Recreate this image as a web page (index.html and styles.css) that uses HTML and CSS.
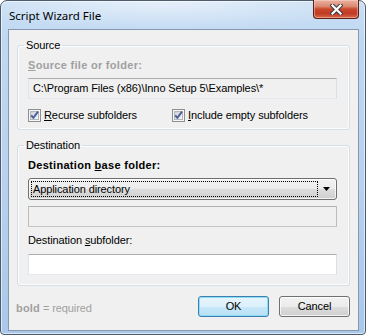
FILE: index.html
```html
<!DOCTYPE html>
<html>
<head>
<meta charset="utf-8">
<link rel="stylesheet" href="styles.css">
</head>
<body>
<div class="window">
  <div class="titlebar">
    <span class="title">Script Wizard File</span>
    <div class="close">
      <svg width="13" height="11" viewBox="0 0 13 11">
        <path d="M2.5 1.5 L10.5 9.5 M10.5 1.5 L2.5 9.5" stroke="#3b3b44" stroke-width="4.2" stroke-linecap="square" fill="none"/>
        <path d="M2.5 1.5 L10.5 9.5 M10.5 1.5 L2.5 9.5" stroke="#ffffff" stroke-width="2.2" stroke-linecap="square" fill="none"/>
      </svg>
    </div>
  </div>
  <div class="client">
    <fieldset class="group group-source">
      <legend>Source</legend>
      <div class="label bold disabled"><u>S</u>ource file or folder:</div>
      <div class="edit readonly">C:\Program Files (x86)\Inno Setup 5\Examples\*</div>
      <div class="checks">
        <div class="check">
          <span class="box">
            <svg width="13" height="13" viewBox="0 0 13 13">
              <defs><linearGradient id="cg1" x1="0" y1="0" x2="1" y2="1"><stop offset="0" stop-color="#cbcfd5"/><stop offset="1" stop-color="#f7f7f7"/></linearGradient></defs>
              <rect x="0.5" y="0.5" width="12" height="12" fill="#f6f6f6" stroke="#8e8f8f"/>
              <rect x="2.5" y="2.5" width="8" height="8" fill="url(#cg1)" stroke="#b1b6bc"/>
              <path d="M3.2 6.3 L5.4 8.8 L10 2.6" stroke="#4a5e98" stroke-width="1.9" fill="none"/>
            </svg>
          </span>
          <span><u>R</u>ecurse subfolders</span>
        </div>
        <div class="check">
          <span class="box">
            <svg width="13" height="13" viewBox="0 0 13 13">
              <defs><linearGradient id="cg2" x1="0" y1="0" x2="1" y2="1"><stop offset="0" stop-color="#cbcfd5"/><stop offset="1" stop-color="#f7f7f7"/></linearGradient></defs>
              <rect x="0.5" y="0.5" width="12" height="12" fill="#f6f6f6" stroke="#8e8f8f"/>
              <rect x="2.5" y="2.5" width="8" height="8" fill="url(#cg2)" stroke="#b1b6bc"/>
              <path d="M3.2 6.3 L5.4 8.8 L10 2.6" stroke="#4a5e98" stroke-width="1.9" fill="none"/>
            </svg>
          </span>
          <span><u>I</u>nclude empty subfolders</span>
        </div>
      </div>
    </fieldset>

    <fieldset class="group group-dest">
      <legend>Destination</legend>
      <div class="label bold">Destination <u>b</u>ase folder:</div>
      <div class="combo">
        <div class="combo-focus">Application directory</div>
        <div class="combo-arrow">
          <svg width="7" height="4" viewBox="0 0 7 4"><path d="M0 0 H7 L3.5 4 Z" fill="#000"/></svg>
        </div>
      </div>
      <div class="edit disabled-edit"></div>
      <div class="label label-sub">Destination <u>s</u>ubfolder:</div>
      <div class="edit normal"></div>
    </fieldset>

    <div class="footer">
      <div class="hint"><b>bold</b> = required</div>
      <div class="buttons">
        <div class="btn btn-default">OK</div>
        <div class="btn">Cancel</div>
      </div>
    </div>
  </div>
</div>
</body>
</html>
```
FILE: styles.css
```css
html, body {
  margin: 0;
  padding: 0;
  background: #ffffff;
}

.window {
  box-sizing: border-box;
  width: 366px;
  height: 335px;
  border: 1px solid #4e5d6d;
  border-radius: 7px 7px 4px 4px;
  padding: 0 6px 3px 7px;
  display: flex;
  flex-direction: column;
  background:
    radial-gradient(ellipse 60% 30px at 45% 0%, rgba(255,255,255,0.55), rgba(255,255,255,0)),
    linear-gradient(180deg, #c9def4 0%, #bfd8f2 12%, #b6d0ee 60%, #a9c8ea 100%);
  box-shadow: inset 0 0 0 1px rgba(255,255,255,0.55);
  font-family: "Liberation Sans", Arial, sans-serif;
  font-size: 11px;
  letter-spacing: -0.1px;
  color: #000;
}

.titlebar {
  height: 28px;
  display: flex;
  align-items: flex-start;
  justify-content: space-between;
}

.title {
  align-self: center;
  font-family: "Noto Sans", "Open Sans", sans-serif;
  font-size: 11.5px;
  letter-spacing: 0;
  line-height: 16px;
  padding-left: 1px;
  margin-top: 1px;
  color: #000;
}

.close {
  box-sizing: border-box;
  width: 46px;
  height: 19px;
  margin-top: -1px;
  border: 1px solid #5c1e12;
  border-top: none;
  border-radius: 0 0 4px 4px;
  background:
    linear-gradient(180deg, #eab3a3 0%, #dc8a72 35%, #c8492f 50%, #c13a22 75%, #d86a4c 100%);
  box-shadow: inset 0 0 0 1px rgba(255,220,210,0.45);
  display: flex;
  align-items: center;
  justify-content: center;
}

.close svg {
  display: block;
}

.client {
  flex: 1;
  border: 1px solid #8598ad;
  background: #f0f0f0;
  padding: 8px 8px 0 8px;
  display: flex;
  flex-direction: column;
}

.group {
  margin: 0;
  min-width: 0;
  border: 1px solid #d5dfe5;
  border-radius: 3px;
  box-shadow: inset 0 0 0 1px #fbfcfd;
  padding: 6px 12px 7px 10px;
}

.group legend {
  padding: 0 2px;
  margin-left: -4px;
  line-height: 14px;
  font-size: 11px;
}

.group-dest {
  margin-top: 8px;
  padding-bottom: 10px;
}

.label {
  line-height: 14px;
  white-space: nowrap;
}

.bold {
  font-weight: bold;
  letter-spacing: 0.3px;
}

.disabled {
  color: #a0a0a0;
}

.edit {
  box-sizing: border-box;
  height: 21px;
  line-height: 19px;
  padding: 0 3px;
  margin-top: 6px;
  border: 1px solid;
  white-space: nowrap;
  overflow: hidden;
}

.readonly {
  background: #f0f0f0;
  border-color: #abadb3 #dbdfe6 #e3e9ef #e2e3ea;
  padding-left: 4px;
}

.disabled-edit {
  background: #f0f0f0;
  border-color: #adb2b5 #bdbdbd #c5c5c5 #bdbdbd;
  margin-top: 6px;
}

.normal {
  background: #ffffff;
  border-color: #abadb3 #dbdfe6 #e3e9ef #e2e3ea;
  margin-top: 7px;
}

.label-sub {
  margin-top: 6px;
}

.checks {
  margin-top: 9px;
  display: grid;
  grid-template-columns: 144px auto;
  line-height: 14px;
}

.check {
  display: flex;
  align-items: center;
  gap: 3px;
  white-space: nowrap;
}

.box {
  display: block;
  width: 13px;
  height: 13px;
}

.box svg {
  display: block;
}

.combo {
  box-sizing: border-box;
  height: 22px;
  margin-top: 6px;
  border: 1px solid #707070;
  border-radius: 3px;
  padding: 2px;
  display: flex;
  background: linear-gradient(180deg, #f2f2f2 0%, #ebebeb 50%, #dddddd 50%, #cfcfcf 100%);
  box-shadow: inset 0 0 0 1px rgba(255,255,255,0.75);
}

.combo-focus {
  flex: 0 0 287px;
  box-sizing: border-box;
  border: 1px dotted #000;
  line-height: 14px;
  padding-left: 1px;
  white-space: nowrap;
}

.combo-arrow {
  flex: 1;
  display: flex;
  align-items: center;
  justify-content: center;
  padding-left: 1px;
}

.combo-arrow svg {
  display: block;
}

.footer {
  margin-top: 10px;
  margin-left: -1px;
  display: flex;
  align-items: center;
  justify-content: space-between;
}

.hint {
  color: #a0a0a0;
  line-height: 14px;
  padding-top: 3px;
}

.hint b {
  letter-spacing: 0.2px;
}

.buttons {
  display: flex;
  gap: 10px;
}

.btn {
  box-sizing: border-box;
  width: 71px;
  height: 21px;
  border: 1px solid #707070;
  border-radius: 3px;
  background: linear-gradient(180deg, #f2f2f2 0%, #ebebeb 50%, #dddddd 50%, #cfcfcf 100%);
  box-shadow: inset 0 0 0 1px rgba(255,255,255,0.75);
  text-align: center;
  line-height: 19px;
}

.btn-default {
  border-color: #3c7fb1;
  background: linear-gradient(180deg, #e8f5fc 0%, #dbf0fb 50%, #c8e8f9 50%, #b9e0f5 100%);
  box-shadow: inset 0 0 0 1px #8ddcf8;
}
```
